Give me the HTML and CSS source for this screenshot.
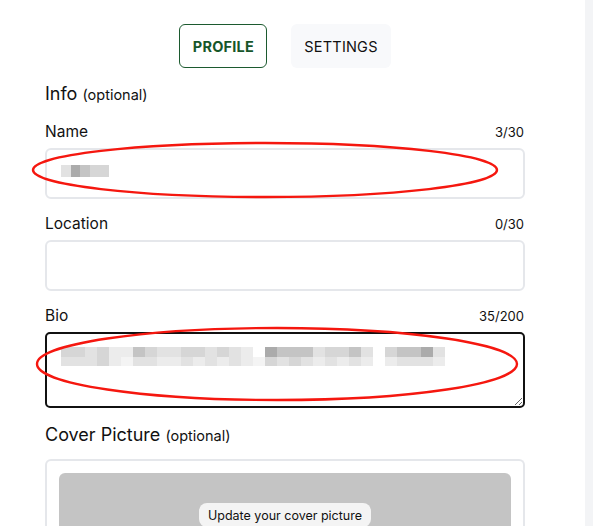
FILE: index.html
```html
<!DOCTYPE html>
<html>
<head>
<meta charset="utf-8">
<link rel="stylesheet" href="styles.css">
</head>
<body>
<div class="page">
  <main class="main">
    <nav class="tabs">
      <button class="tab tab-active">PROFILE</button>
      <button class="tab">SETTINGS</button>
    </nav>

    <h2 class="section">Info <span class="opt">(optional)</span></h2>

    <div class="field">
      <div class="label-row"><span class="label">Name</span><span class="count">3/30</span></div>
      <div class="input">
        <div class="mosaic">
          <div class="mrow"><i class="c5"></i><i class="c2"></i><i class="c3"></i><i class="c4"></i><i class="c4"></i></div>
        </div>
      </div>
    </div>

    <div class="field">
      <div class="label-row"><span class="label">Location</span><span class="count">0/30</span></div>
      <div class="input"></div>
    </div>

    <div class="field">
      <div class="label-row"><span class="label">Bio</span><span class="count">35/200</span></div>
      <div class="bio-wrap">
        <textarea class="bio"></textarea>
        <div class="mosaic bio-mosaic">
          <div class="mrow"><i class="c4"></i><i class="c4"></i><i class="c5"></i><i class="c4"></i><i class="c6"></i><i class="c6"></i><i class="c3"></i><i class="c4"></i><i class="c5"></i><i class="c5"></i><i class="c4"></i><i class="c4"></i><i class="c5"></i><i class="c4"></i><i class="c5"></i><i class="c6"></i><i class="c0"></i><i class="c2"></i><i class="c3"></i><i class="c3"></i><i class="c3"></i><i class="c5"></i><i class="c4"></i><i class="c4"></i><i class="c3"></i><i class="c5"></i><i class="c0"></i><i class="c4"></i><i class="c3"></i><i class="c3"></i><i class="c2"></i><i class="c5"></i></div>
          <div class="mrow mrow2"><i class="c5"></i><i class="c5"></i><i class="c5"></i><i class="c4"></i><i class="c6"></i><i class="c7"></i><i class="c5"></i><i class="c5"></i><i class="c6"></i><i class="c6"></i><i class="c5"></i><i class="c6"></i><i class="c5"></i><i class="c6"></i><i class="c5"></i><i class="c6"></i><i class="c7"></i><i class="c4"></i><i class="c5"></i><i class="c4"></i><i class="c5"></i><i class="c6"></i><i class="c5"></i><i class="c6"></i><i class="c5"></i><i class="c6"></i><i class="c0"></i><i class="c6"></i><i class="c5"></i><i class="c5"></i><i class="c5"></i><i class="c6"></i></div>
        </div>
      </div>
    </div>

    <h2 class="section section-cover">Cover Picture <span class="opt">(optional)</span></h2>
    <div class="cover-box">
      <div class="cover">
        <button class="cover-btn">Update your cover picture</button>
      </div>
    </div>
  </main>
  <aside class="strip"></aside>
</div>
<svg class="marks" width="593" height="526" viewBox="0 0 593 526">
  <ellipse cx="265" cy="170" rx="232" ry="27" fill="none" stroke="#f5170f" stroke-width="2.4"/>
  <ellipse cx="277" cy="364" rx="240" ry="36" fill="none" stroke="#f5170f" stroke-width="2.4"/>
</svg>
</body>
</html>
```

FILE: styles.css
```css
html, body {
  margin: 0;
  padding: 0;
  background: #fff;
  overflow: hidden;
}
body {
  font-family: Inter, "Liberation Sans", sans-serif;
  color: #111;
  width: 593px;
  height: 526px;
}
.page {
  display: flex;
  height: 526px;
}
.main {
  width: 480px;
  padding: 24px 60px 0 45px;
  display: flex;
  flex-direction: column;
}
.strip {
  width: 8px;
  background: #f3f4f6;
}
.tabs {
  display: flex;
  justify-content: center;
  gap: 24px;
}
.tab {
  font-family: Inter, "Liberation Sans", sans-serif;
  height: 44px;
  padding: 0 12px;
  border: 1px solid transparent;
  border-radius: 6px;
  background: #f8f9fb;
  font-size: 14.5px;
  color: #111;
  letter-spacing: 0.2px;
}
.tab-active {
  background: #fff;
  border-color: #1c5a2f;
  color: #16562a;
  font-weight: 700;
  width: 88px;
}
.section {
  margin: 14px 0 0 0;
  font-size: 18px;
  font-weight: 400;
  line-height: 24px;
}
.opt {
  font-size: 14.5px;
}
.field {
  margin-top: 16px;
}
.label-row {
  display: flex;
  justify-content: space-between;
  align-items: baseline;
  line-height: 18px;
  margin-bottom: 7px;
}
.label {
  font-size: 15.5px;
}
.count {
  font-size: 13px;
  margin-right: 1px;
}
.input {
  box-sizing: border-box;
  height: 51px;
  border: 2px solid #e5e7eb;
  border-radius: 6px;
  position: relative;
}
.mosaic {
  position: absolute;
  left: 14px;
  top: 15px;
}
.mrow {
  display: flex;
}
.mrow i {
  display: block;
  width: 9.6px;
  height: 12px;
}
.bio-wrap {
  position: relative;
  height: 76px;
}
.bio {
  box-sizing: border-box;
  width: 480px;
  height: 76px;
  border: 2px solid #111;
  border-radius: 5px;
  margin: 0;
  display: block;
  outline: none;
  resize: vertical;
}
.bio-mosaic {
  left: 16px;
  top: 15px;
}
.bio-mosaic .mrow i {
  width: 12px;
  height: 10px;
}
.bio-mosaic .mrow2 i {
  height: 9px;
}
.c0 { background: #fff; }
.c1 { background: #999; }
.c2 { background: #ababab; }
.c3 { background: #c4c4c4; }
.c4 { background: #d6d6d6; }
.c5 { background: #e2e2e2; }
.c6 { background: #ececec; }
.c7 { background: #f4f4f4; }
.section-cover {
  margin-top: 15px;
}
.cover-box {
  margin-top: 11px;
  box-sizing: border-box;
  border: 2px solid #e5e7eb;
  border-bottom: none;
  border-radius: 6px 6px 0 0;
  padding: 12px 12px 0 12px;
  height: 80px;
}
.cover {
  background: #c4c4c4;
  border-radius: 6px 6px 0 0;
  height: 100px;
  display: flex;
  justify-content: center;
  padding-top: 30px;
  box-sizing: border-box;
}
.cover-btn {
  font-family: Inter, "Liberation Sans", sans-serif;
  align-self: flex-start;
  background: #f4f4f4;
  border: none;
  border-radius: 8px;
  height: 24px;
  padding: 0 9px;
  font-size: 12.5px;
  color: #111;
}
.marks {
  position: absolute;
  left: 0;
  top: 0;
  pointer-events: none;
}
```
